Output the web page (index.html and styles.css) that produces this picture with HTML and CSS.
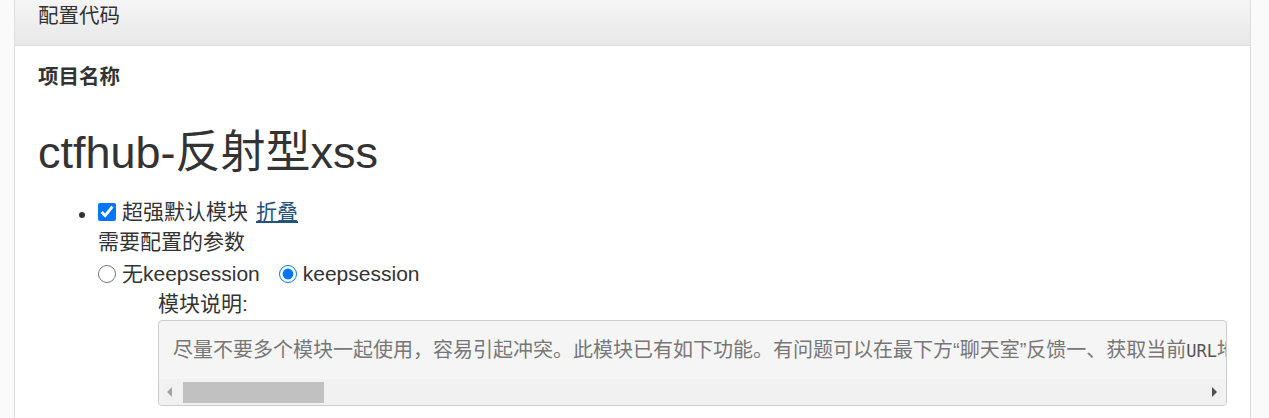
FILE: index.html
```html
<!DOCTYPE html>
<html lang="zh-CN">
<head>
<meta charset="utf-8">
<title>配置代码</title>
<link rel="stylesheet" href="styles.css">
</head>
<body>
<div class="panel">
  <div class="panel-heading">配置代码</div>
  <div class="panel-body">
    <div class="label">项目名称</div>
    <h1 class="title">ctfhub-反射型xss</h1>
    <ul class="modules">
      <li>
        <div class="row"><input type="checkbox" class="chk" checked><span>超强默认模块</span><a href="#" class="link">折叠</a></div>
        <div class="row">需要配置的参数</div>
        <div class="row radios">
          <label class="opt"><input type="radio" name="ks" class="rad"><span>无keepsession</span></label>
          <label class="opt"><input type="radio" name="ks" class="rad" checked><span>keepsession</span></label>
        </div>
        <div class="desc">
          <div class="desc-label">模块说明:</div>
          <div class="pre">
            <div class="pre-text">尽量不要多个模块一起使用，容易引起冲突。此模块已有如下功能。有问题可以在最下方“聊天室”反馈一、获取当前<span class="mono">URL</span>地址二、获取来路地址三、获取cookie四、获取操作系统五、获取浏览器六、获取屏幕分辨率七、获取页面源码</div>
            <div class="scrollbar">
              <span class="arrow left"></span>
              <div class="track"><div class="thumb"></div></div>
              <span class="arrow right"></span>
            </div>
          </div>
        </div>
      </li>
    </ul>
  </div>
</div>
</body>
</html>
```
FILE: styles.css
```css
html, body {
  margin: 0;
  padding: 0;
  background: #fafafa;
  height: 100%;
  overflow: hidden;
}
body {
  font-family: "Liberation Sans", "Noto Sans CJK SC", sans-serif;
  color: #333;
  font-size: 21px;
}
.panel {
  margin-left: 14px;
  width: 1235px;
  border-left: 1px solid #ddd;
  border-right: 1px solid #ddd;
  background: #fff;
  min-height: 100%;
}
.panel-heading {
  height: 46px;
  box-sizing: border-box;
  padding: 4px 23px 0;
  line-height: 23px;
  font-size: 20.5px;
  color: #333;
  background: linear-gradient(to bottom, #f5f5f5 0%, #e8e8e8 100%);
  border-bottom: 1px solid #ddd;
}
.panel-body {
  padding: 17px 23px 0;
}
.label {
  font-weight: bold;
  line-height: 28px;
  font-size: 20.5px;
}
.title {
  margin: 37px 0 0;
  font-size: 45px;
  font-weight: normal;
  line-height: 50px;
}
.modules {
  margin: 19px 0 0;
  padding-left: 60px;
}
.modules li {
  line-height: 30px;
}
.row {
  display: flex;
  align-items: center;
  height: 30px;
}
.chk, .rad {
  flex: none;
  width: 18px;
  height: 18px;
  margin: 0 6px 0 0;
}
.link {
  margin-left: 8px;
  color: #23527c;
  text-decoration: underline;
}
.radios {
  height: 34px;
}
.opt {
  display: flex;
  align-items: center;
  margin-right: 19px;
}
.desc {
  margin-left: 60px;
}
.desc-label {
  line-height: 26px;
}
.pre {
  margin-top: 3px;
  border: 1px solid #ccc;
  border-radius: 4px;
  background: #f5f5f5;
  overflow: hidden;
}
.pre-text {
  padding: 14px 14px 13px;
  line-height: 30px;
  white-space: nowrap;
  overflow: hidden;
  color: #777;
  font-size: 20px;
}
.mono {
  font-family: "DejaVu Sans Mono", monospace;
  font-size: 17px;
  color: #555;
}
.scrollbar {
  display: flex;
  align-items: center;
  height: 26px;
  background: #f1f1f1;
}
.arrow {
  width: 0;
  height: 0;
  border-top: 5px solid transparent;
  border-bottom: 5px solid transparent;
}
.arrow.left {
  margin: 0 0 0 8px;
  border-right: 5px solid #a3a3a3;
}
.arrow.right {
  margin: 0 9px 0 0;
  border-left: 5px solid #505050;
}
.track {
  flex: 1;
  height: 21px;
  padding: 0 12px 0 11px;
}
.thumb {
  width: 141px;
  height: 21px;
  background: #c1c1c1;
}
```
